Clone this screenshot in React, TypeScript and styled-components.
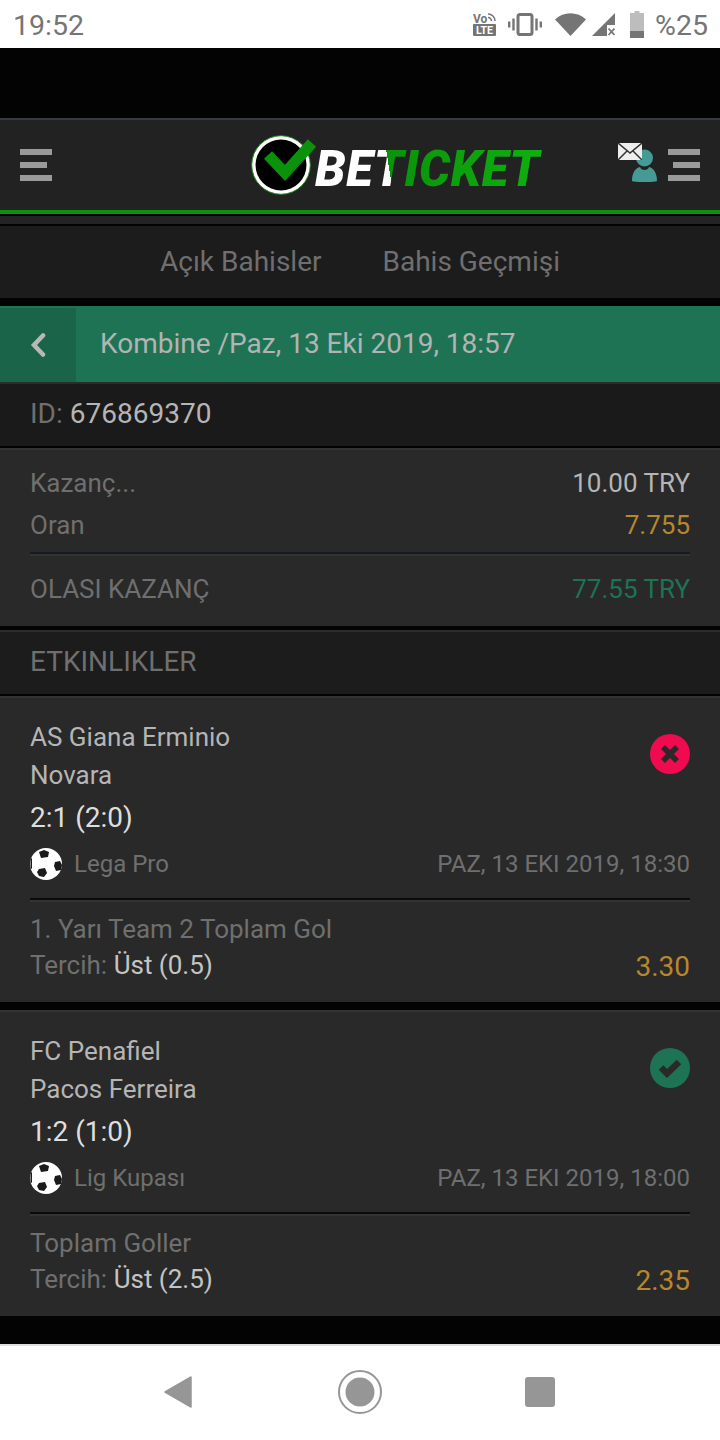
import React from "react";
import styled, { createGlobalStyle } from "styled-components";

const GlobalStyle = createGlobalStyle`
  html, body {
    margin: 0;
    padding: 0;
    background: #040304;
    font-family: Roboto, "Liberation Sans", sans-serif;
  }
  * { box-sizing: border-box; }
`;

const Screen = styled.div`
  width: 720px;
  height: 1440px;
  display: flex;
  flex-direction: column;
  background: #040304;
  overflow: hidden;
`;

const StatusBar = styled.div`
  height: 48px;
  flex: none;
  background: #fff;
  display: flex;
  align-items: center;
  justify-content: space-between;
  padding: 3px 12px 0 13px;
  color: #757575;
  font-size: 28.5px;
`;

const StatusIcons = styled.div`
  display: flex;
  align-items: center;
`;

const StatusIcon = styled.svg<{ $ml: number }>`
  margin-left: ${(p) => p.$ml}px;
  margin-top: -3px;
`;

const Percent = styled.span`
  margin-left: 11px;
`;

const Gap = styled.div<{ $h: number }>`
  height: ${(p) => p.$h}px;
  flex: none;
`;

const Header = styled.header`
  height: 92px;
  flex: none;
  background: #222222;
  border-top: 2px solid #363a45;
  display: flex;
  align-items: center;
  padding: 0 20px;
`;

const Burger = styled.div<{ $flip?: boolean }>`
  width: 32px;
  display: flex;
  flex-direction: column;
  align-items: ${(p) => (p.$flip ? "flex-end" : "flex-start")};
  gap: 7px;
`;

const BurgerLine = styled.span<{ $w: number }>`
  display: block;
  height: 6px;
  width: ${(p) => p.$w}px;
  background: #9a9a9a;
`;

const Logo = styled.div`
  display: flex;
  align-items: center;
  margin-left: 199px;
`;

const LogoMark = styled.svg`
  overflow: visible;
  flex: none;
`;

const LogoWord = styled.div`
  font-style: italic;
  font-weight: 900;
  font-size: 49px;
  line-height: 50px;
  letter-spacing: 0.5px;
  padding: 9px 3px 0 0;
  background: linear-gradient(81deg, #fff 0 33%, #0a930a 33%, #10b010 100%);
  -webkit-background-clip: text;
  background-clip: text;
  color: transparent;
  -webkit-text-fill-color: transparent;
`;

const HeaderRight = styled.div`
  margin-left: auto;
  display: flex;
  align-items: center;
  gap: 11px;
`;

const UserBox = styled.div`
  position: relative;
  width: 25px;
  height: 33px;
`;

const Envelope = styled.svg`
  position: absolute;
  left: -14px;
  top: -6px;
`;

const GreenLine = styled.div`
  height: 4px;
  flex: none;
  background: #0a920a;
`;

const Stripe = styled.div`
  height: 8px;
  flex: none;
  background: #232323;
`;

const Tabs = styled.nav`
  height: 72px;
  flex: none;
  background: #1c1c1c;
  display: flex;
  align-items: center;
  justify-content: center;
  gap: 61px;
  padding-bottom: 2px;
  color: #6f6f6f;
  font-size: 28px;
`;

const TitleBar = styled.div`
  height: 76px;
  flex: none;
  background: #1e7355;
  display: flex;
  align-items: stretch;
`;

const BackBox = styled.div`
  width: 76px;
  margin-top: 2px;
  background: #1a6549;
  display: flex;
  align-items: center;
  justify-content: center;
`;

const Title = styled.div`
  padding: 0 0 2px 24px;
  display: flex;
  align-items: center;
  color: #b3b3b3;
  font-size: 28px;
`;

const IdRow = styled.div`
  height: 64px;
  flex: none;
  background: #1a1a1a;
  border-top: 2px solid #2c2c2c;
  display: flex;
  align-items: center;
  padding: 0 30px 3px;
  font-size: 28px;
  color: #6f6f6f;
`;

const Light = styled.span`
  color: #b5b5b5;
  margin-left: 7px;
`;

const Card = styled.section<{ $h: number }>`
  height: ${(p) => p.$h}px;
  flex: none;
  background: #292929;
  border-top: 2px solid #333333;
  padding: 0 30px;
`;

const SummaryRow = styled.div<{ $h: number }>`
  height: ${(p) => p.$h}px;
  display: flex;
  align-items: center;
  justify-content: space-between;
  font-size: 26px;
  color: #6f6f6f;
`;

const Amount = styled.span<{ $color: string }>`
  color: ${(p) => p.$color};
`;

const Rule = styled.div<{ $color?: string }>`
  height: 2px;
  background: ${(p) => p.$color || "#0b0b0b"};
  box-shadow: 0 2px 0 #333333;
`;

const SectionHead = styled.div`
  height: 64px;
  flex: none;
  background: #1c1c1c;
  border-top: 2px solid #2c2c2c;
  display: flex;
  align-items: center;
  padding: 0 30px 4px;
  color: #6f6f6f;
  font-size: 28px;
`;

const MatchTop = styled.div`
  display: flex;
  justify-content: space-between;
  align-items: flex-start;
  padding-top: 20px;
`;

const Teams = styled.div`
  color: #b5b5b5;
  font-size: 26px;
  line-height: 38px;
`;

const Score = styled.div`
  color: #dedede;
  font-size: 28px;
  line-height: 42px;
  margin-top: 3px;
`;

const StateBadge = styled.div<{ $ok?: boolean }>`
  width: 40px;
  height: 40px;
  margin-top: 16px;
  border-radius: 50%;
  background: ${(p) => (p.$ok ? "#1e7355" : "#f00a50")};
  display: flex;
  align-items: center;
  justify-content: center;
`;

const MetaRow = styled.div`
  display: flex;
  align-items: center;
  justify-content: space-between;
  height: 50px;
  margin-bottom: 9px;
  font-size: 24px;
  color: #6f6f6f;
`;

const League = styled.div`
  display: flex;
  align-items: center;
  gap: 12px;
`;

const MarketName = styled.div`
  color: #6f6f6f;
  font-size: 26px;
  line-height: 36px;
  margin-top: 11px;
`;

const PickRow = styled.div`
  display: flex;
  justify-content: space-between;
  align-items: center;
  height: 36px;
  font-size: 26px;
  color: #6f6f6f;
`;

const PickValue = styled.span`
  color: #c4c4c4;
`;

const Odd = styled.span`
  color: #b5872f;
  font-size: 28px;
  padding-top: 2px;
`;

const NavBar = styled.div`
  flex: 1;
  background: #fff;
  border-top: 2px solid #e0e0e0;
  display: grid;
  grid-template-columns: repeat(3, 180px);
  justify-content: center;
  align-items: center;
  padding-bottom: 2px;
`;

const NavCell = styled.div<{ $shift?: number }>`
  display: flex;
  justify-content: center;
  padding-right: ${(p) => p.$shift || 0}px;
`;

function Ball() {
  return (
    <svg width="32" height="32" viewBox="0 0 32 32">
      <circle cx="16" cy="16" r="16" fill="#fff" />
      <path d="M9 4l5-2 5 2-1 5-7 1z" fill="#1a1a1a" />
      <path d="M25 14l5-1 2 4-1 5-5 1-2-5z" fill="#1a1a1a" />
      <path d="M9 21l6-1 2 5-3 4-5-1-2-4z" fill="#1a1a1a" />
      <path d="M.5 11L2 10v11l-1.500-1z" fill="#1a1a1a" />
    </svg>
  );
}

function Match(props: {
  h: number;
  home: string;
  away: string;
  score: string;
  league: string;
  date: string;
  market: string;
  pick: string;
  odd: string;
  ok?: boolean;
}) {
  return (
    <Card $h={props.h}>
      <MatchTop>
        <Teams>
          {props.home}
          <br />
          {props.away}
          <Score>{props.score}</Score>
        </Teams>
        <StateBadge $ok={props.ok}>
          {props.ok ? (
            <svg width="26" height="20" viewBox="0 0 26 20">
              <path d="M4 9.500l6 6L22 4" fill="none" stroke="#292929" strokeWidth="6.500" />
            </svg>
          ) : (
            <svg width="20" height="20" viewBox="0 0 20 20">
              <path d="M3 3l14 14M17 3L3 17" fill="none" stroke="#292929" strokeWidth="5.500" />
            </svg>
          )}
        </StateBadge>
      </MatchTop>
      <MetaRow>
        <League>
          <Ball />
          {props.league}
        </League>
        <span>{props.date}</span>
      </MetaRow>
      <Rule />
      <MarketName>{props.market}</MarketName>
      <PickRow>
        <span>
          Tercih: <PickValue>{props.pick}</PickValue>
        </span>
        <Odd>{props.odd}</Odd>
      </PickRow>
    </Card>
  );
}

export default function App() {
  return (
    <Screen>
      <GlobalStyle />
      <StatusBar>
        <span>19:52</span>
        <StatusIcons>
          <StatusIcon $ml={0} width="23" height="23" viewBox="0 0 23 23">
            <text x="0" y="10" fontSize="12" fontWeight="700" fill="#757575" fontFamily="Roboto, sans-serif">Vo</text>
            <path d="M15 1a7 7 0 0 1 7 7M15 4.500a3.500 3.500 0 0 1 3.500 3.500" fill="none" stroke="#757575" strokeWidth="1.500" />
            <rect x="0" y="11" width="23" height="12" rx="1" fill="#757575" />
            <text x="11.500" y="21" fontSize="10.500" fontWeight="700" textAnchor="middle" fill="#fff" fontFamily="Roboto, sans-serif">LTE</text>
          </StatusIcon>
          <StatusIcon $ml={12} width="34" height="23" viewBox="0 0 34 23">
            <rect x="10" y="1.500" width="14" height="20" rx="2" fill="none" stroke="#757575" strokeWidth="3" />
            <path d="M5.500 5.500v12M28.500 5.500v12M1.200 8.500v6M32.800 8.500v6" stroke="#757575" strokeWidth="2.400" />
          </StatusIcon>
          <StatusIcon $ml={13} width="31" height="23" viewBox="0 0 31 23">
            <path d="M0 6.500C8.500-2 22.500-2 31 6.500L15.500 23z" fill="#757575" />
          </StatusIcon>
          <StatusIcon $ml={6} width="23" height="23" viewBox="0 0 23 23">
            <path d="M0 23L23 0v12h-8v11z" fill="#757575" />
            <path d="M16.500 15.500l6 6.500M22.500 15.500l-6 6.500" stroke="#757575" strokeWidth="1.800" />
          </StatusIcon>
          <StatusIcon $ml={15} width="14" height="27" viewBox="0 0 14 27">
            <path d="M4.500 0h5v2H14v25H0V2h4.500z" fill="#bdbdbd" />
            <rect y="20" width="14" height="7" fill="#757575" />
          </StatusIcon>
          <Percent>%25</Percent>
        </StatusIcons>
      </StatusBar>

      <Gap $h={70} />

      <Header>
        <Burger>
          <BurgerLine $w={32} />
          <BurgerLine $w={27} />
          <BurgerLine $w={32} />
        </Burger>
        <Logo>
          <LogoMark width="64" height="62" viewBox="0 0 64 62">
            <circle cx="30" cy="31" r="29.300" fill="#fff" stroke="#1e8a1e" strokeWidth="1" />
            <circle cx="30" cy="31" r="25.500" fill="#000" />
            <path d="M17 21l17 18L61 9" fill="none" stroke="#0a920a" strokeWidth="11" />
          </LogoMark>
          <LogoWord>BETICKET</LogoWord>
        </Logo>
        <HeaderRight>
          <UserBox>
            <svg width="25" height="33" viewBox="0 0 25 33">
              <circle cx="12.500" cy="9" r="8.500" fill="#459a96" />
              <path d="M0 32C0 23 4 19 8 18c1 4 8 4 9 0 4 1 8 5 8 14 0 1.500-25 1.500-25 0z" fill="#459a96" />
            </svg>
            <Envelope width="24" height="17" viewBox="0 0 24 17">
              <rect width="24" height="17" fill="#eeeeee" />
              <path d="M0 0l12 10L24 0M0 17l9-9M24 17l-9-9" fill="none" stroke="#333" strokeWidth="1.500" />
            </Envelope>
          </UserBox>
          <Burger $flip>
            <BurgerLine $w={32} />
            <BurgerLine $w={27} />
            <BurgerLine $w={32} />
          </Burger>
        </HeaderRight>
      </Header>
      <GreenLine />
      <Gap $h={2} />
      <Stripe />
      <Gap $h={2} />

      <Tabs>
        <span>Açık Bahisler</span>
        <span>Bahis Geçmişi</span>
      </Tabs>
      <Gap $h={8} />

      <TitleBar>
        <BackBox>
          <svg width="16" height="26" viewBox="0 0 16 26">
            <path d="M13 3.500L4 13l9 9.500" fill="none" stroke="#b8b8b8" strokeWidth="4.500" strokeLinecap="round" />
          </svg>
        </BackBox>
        <Title>Kombine /Paz, 13 Eki 2019, 18:57</Title>
      </TitleBar>

      <IdRow>
        ID:<Light>676869370</Light>
      </IdRow>
      <Gap $h={2} />

      <Card $h={178}>
        <SummaryRow $h={66}>
          <span>Kazanç...</span>
          <Amount $color="#b5b5b5">10.00 TRY</Amount>
        </SummaryRow>
        <SummaryRow $h={18}>
          <span>Oran</span>
          <Amount $color="#b5872f">7.755</Amount>
        </SummaryRow>
        <Gap $h={18} />
        <Rule $color="#151a26" />
        <SummaryRow $h={70}>
          <span>OLASI KAZANÇ</span>
          <Amount $color="#1e7355">77.55 TRY</Amount>
        </SummaryRow>
      </Card>
      <Gap $h={4} />

      <SectionHead>ETKINLIKLER</SectionHead>
      <Gap $h={2} />

      <Match
        h={306}
        home="AS Giana Erminio"
        away="Novara"
        score="2:1 (2:0)"
        league="Lega Pro"
        date="PAZ, 13 EKI 2019, 18:30"
        market="1. Yarı Team 2 Toplam Gol"
        pick="Üst (0.5)"
        odd="3.30"
      />
      <Gap $h={8} />
      <Match
        h={306}
        ok
        home="FC Penafiel"
        away="Pacos Ferreira"
        score="1:2 (1:0)"
        league="Lig Kupası"
        date="PAZ, 13 EKI 2019, 18:00"
        market="Toplam Goller"
        pick="Üst (2.5)"
        odd="2.35"
      />
      <Gap $h={28} />

      <NavBar>
        <NavCell $shift={4}>
          <svg width="28" height="32" viewBox="0 0 28 32">
            <path d="M1 16L27 1v30z" fill="#969696" stroke="#969696" strokeWidth="1.500" strokeLinejoin="round" />
          </svg>
        </NavCell>
        <NavCell>
          <svg width="44" height="44" viewBox="0 0 44 44">
            <circle cx="22" cy="22" r="21" fill="none" stroke="#969696" strokeWidth="2" />
            <circle cx="22" cy="22" r="14.500" fill="#969696" />
          </svg>
        </NavCell>
        <NavCell>
          <svg width="30" height="30" viewBox="0 0 30 30">
            <rect width="30" height="30" rx="3" fill="#969696" />
          </svg>
        </NavCell>
      </NavBar>
    </Screen>
  );
}
